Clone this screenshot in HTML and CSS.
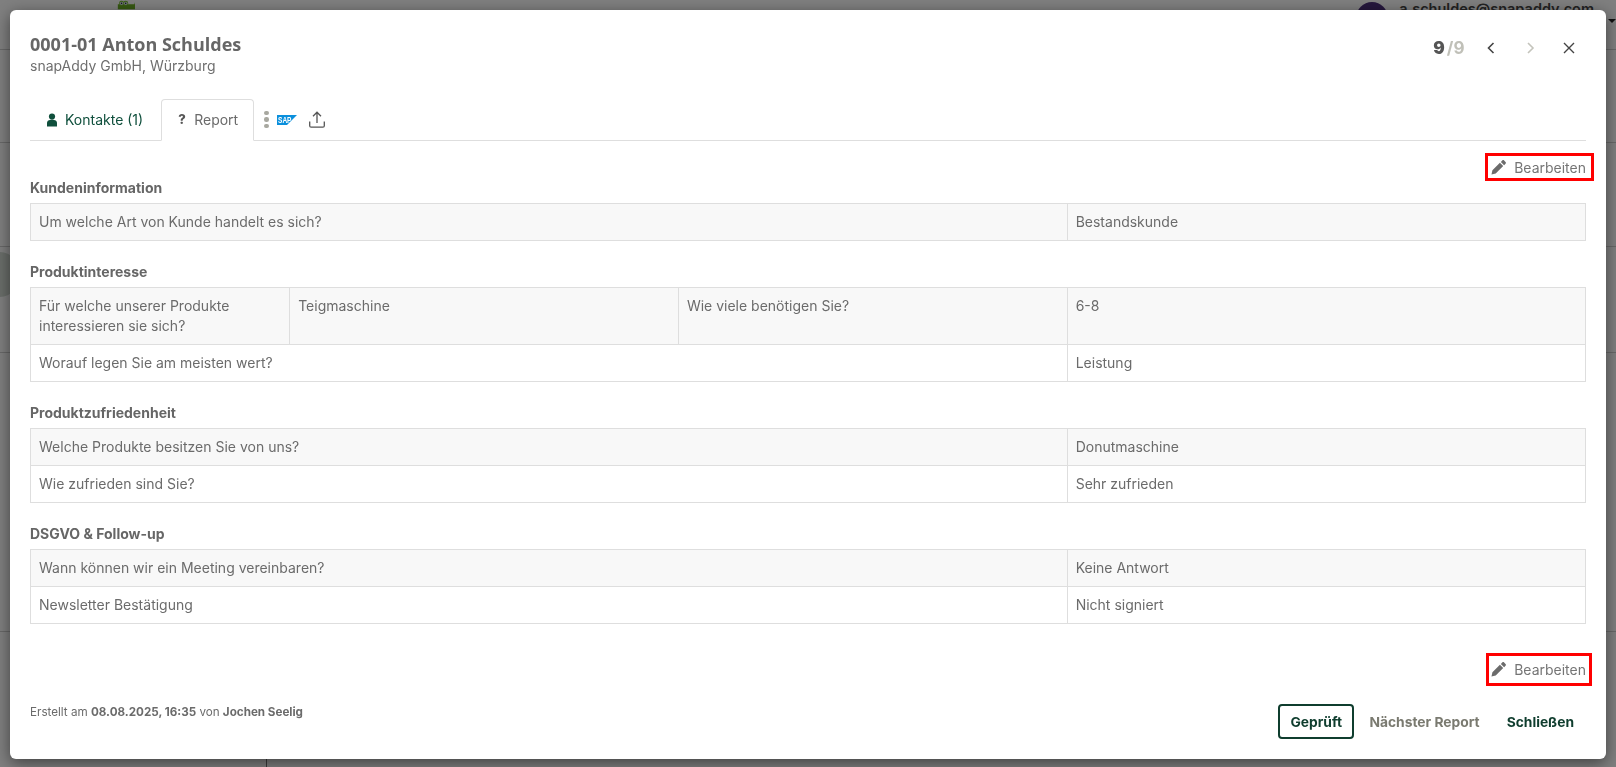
FILE: index.html
```html
<!DOCTYPE html>
<html lang="de">
<head>
<meta charset="utf-8">
<title>Report</title>
<link rel="stylesheet" href="styles.css">
</head>
<body>
<div class="page">
  <div class="bgrow r1">
    <svg class="frog" viewBox="0 0 22 10" width="22" height="10"><path d="M1 10V4h20l1-3v9z" fill="#6cb024"/><circle cx="5.500" cy="3" r="3" fill="#78c030"/><circle cx="10.500" cy="3" r="3" fill="#78c030"/><circle cx="5.500" cy="3" r="2" fill="#eef"/><circle cx="10.500" cy="3" r="2" fill="#eef"/><circle cx="5.500" cy="3" r="1" fill="#234"/><circle cx="10.500" cy="3" r="1" fill="#234"/></svg>
    <div class="user"><span class="avatar"></span><span class="email">a.schuldes@snapaddy.com</span></div>
    <span class="caret"></span>
  </div>
  <div class="bgrow r2"></div>
  <div class="bgrow r3"></div>
  <div class="bgrow r4"><span class="blob"></span></div>
  <div class="bgrow r5"></div>
  <div class="bgrow r6"><span class="vline"></span></div>
</div>
<div class="overlay"></div>
<main class="modal">
  <header class="head">
    <div>
      <h1 class="title">0001-01 Anton Schuldes</h1>
      <div class="sub">snapAddy GmbH, Würzburg</div>
    </div>
    <div class="pager">
      <span class="count"><b>9</b> <i>/9</i></span>
      <svg class="nav" viewBox="0 0 16 16" width="16" height="16"><path d="M10.500 3 5.500 8l5 5" fill="none" stroke="#444" stroke-width="1.600"/></svg>
      <svg class="nav" viewBox="0 0 16 16" width="16" height="16"><path d="M5 3l5 5-5 5" fill="none" stroke="#c4c4bc" stroke-width="1.600"/></svg>
      <svg class="nav close" viewBox="0 0 16 16" width="16" height="16"><path d="M3 3l10 10M13 3 3 13" fill="none" stroke="#444" stroke-width="1.400"/></svg>
    </div>
  </header>
  <nav class="tabs">
    <a class="tab">
      <svg viewBox="0 0 12 14" width="12" height="14"><circle cx="6" cy="3.600" r="3.100" fill="#0f4f3c"/><path d="M1 13.500V10c0-2 1.500-3 3-3h4c1.500 0 3 1 3 3v3.500z" fill="#0f4f3c"/></svg>
      Kontakte (1)
    </a>
    <a class="tab active"><span class="q">?</span> Report</a>
    <span class="dots"><i></i><i></i><i></i></span>
    <svg class="sap" viewBox="0 0 20 10" width="20" height="10"><path d="M0 0h20L10 10H0z" fill="#0a8fdc"/><text x="1" y="7.800" font-size="8.500" font-weight="700" font-family="Liberation Sans" textLength="13.500" lengthAdjust="spacingAndGlyphs" fill="#fff">SAP</text></svg>
    <svg class="upload" viewBox="0 0 16 17" width="16" height="17"><path d="M8 12V1.500M4 5.200l4-4 4 4M.7 10.500v4.200c0 .9.500 1.500 1.400 1.500h11.800c.9 0 1.400-.6 1.400-1.500v-4.200" fill="none" stroke="#555" stroke-width="1.300"/></svg>
  </nav>
  <div class="edit-row first"><a class="edit">
    <svg viewBox="0 0 16 16" width="15" height="15"><path d="M0.500 15.500l1-4.500 8-8 3.500 3.500-8 8zM10.500 2l1.500-1.500c.6-.6 1.400-.6 2 0l1.500 1.500c.6.6.6 1.400 0 2L14 5.500z" fill="#6b6b6b"/></svg>
    Bearbeiten</a></div>

  <section class="group first-group">
    <h2>Kundeninformation</h2>
    <table>
      <colgroup><col class="c1"><col class="c2"><col class="c3"><col class="c4"></colgroup>
      <tr class="odd"><td colspan="3">Um welche Art von Kunde handelt es sich?</td><td>Bestandskunde</td></tr>
    </table>
  </section>
  <section class="group">
    <h2>Produktinteresse</h2>
    <table>
      <colgroup><col class="c1"><col class="c2"><col class="c3"><col class="c4"></colgroup>
      <tr class="odd"><td>Für welche unserer Produkte interessieren sie sich?</td><td>Teigmaschine</td><td>Wie viele benötigen Sie?</td><td>6-8</td></tr>
      <tr><td colspan="3">Worauf legen Sie am meisten wert?</td><td>Leistung</td></tr>
    </table>
  </section>
  <section class="group">
    <h2>Produktzufriedenheit</h2>
    <table>
      <colgroup><col class="c1"><col class="c2"><col class="c3"><col class="c4"></colgroup>
      <tr class="odd"><td colspan="3">Welche Produkte besitzen Sie von uns?</td><td>Donutmaschine</td></tr>
      <tr><td colspan="3">Wie zufrieden sind Sie?</td><td>Sehr zufrieden</td></tr>
    </table>
  </section>
  <section class="group">
    <h2>DSGVO &amp; Follow-up</h2>
    <table>
      <colgroup><col class="c1"><col class="c2"><col class="c3"><col class="c4"></colgroup>
      <tr class="odd"><td colspan="3">Wann können wir ein Meeting vereinbaren?</td><td>Keine Antwort</td></tr>
      <tr><td colspan="3">Newsletter Bestätigung</td><td>Nicht signiert</td></tr>
    </table>
  </section>

  <div class="edit-row second"><a class="edit">
    <svg viewBox="0 0 16 16" width="15" height="15"><path d="M0.500 15.500l1-4.500 8-8 3.500 3.500-8 8zM10.500 2l1.500-1.500c.6-.6 1.400-.6 2 0l1.500 1.500c.6.6.6 1.400 0 2L14 5.500z" fill="#6b6b6b"/></svg>
    Bearbeiten</a></div>

  <footer class="foot">
    <div class="meta">Erstellt am <b>08.08.2025, 16:35</b> von <b>Jochen Seelig</b></div>
    <div class="actions">
      <button class="btn outline">Geprüft</button>
      <button class="btn muted">Nächster Report</button>
      <button class="btn plain">Schließen</button>
    </div>
  </footer>
</main>
</body>
</html>
```
FILE: styles.css
```css
* { box-sizing: border-box; }
html, body { margin: 0; height: 100%; overflow: hidden; }
body { background: #fff; font-family: Inter, "Liberation Sans", sans-serif; font-size: 14px; color: #6b6b6b; }
.page { height: 767px; }
.bgrow { border-bottom: 1px solid #d0d0d0; }
.r1 { height: 50px; display: flex; align-items: flex-start; }
.r2 { height: 93px; }
.r3 { height: 104px; }
.r4 { height: 101px; }
.r5 { height: 279px; }
.r6 { height: 140px; border-bottom: 0; display: flex; }
.frog { margin: 0 0 0 117px; }
.user { margin-left: 1221px; display: flex; gap: 11px; align-items: flex-start; }
.avatar { width: 32px; height: 32px; margin-top: 2px; border-radius: 50%; background: #4b2e7a; }
.email { font-size: 14.500px; font-weight: 600; color: #444; line-height: 18px; }
.caret { margin: 19px 0 0 14px; border: 4px solid transparent; border-top-color: #222; border-bottom: 0; }
.blob { display: block; width: 40px; height: 45px; margin: 5px 0 0 -20px; border-radius: 50%; background: #d4dcd4; }
.vline { width: 1px; height: 100%; margin-left: 266px; background: #777; }
.overlay { position: fixed; inset: 0; background: rgba(0,0,0,.5); }
.modal {
  position: fixed; left: 10px; top: 10px; width: 1596px; height: 749px;
  background: #fff; border-radius: 6px; padding: 0 20px;
  box-shadow: 0 4px 16px rgba(0,0,0,.5);
}
.head { display: flex; justify-content: space-between; align-items: flex-start; padding-top: 23px; height: 89px; }
.title { margin: 0; font-size: 18px; line-height: 23px; font-weight: 700; color: #666; font-family: "Open Sans", Inter, sans-serif; }
.sub { font-size: 14px; line-height: 18px; color: #6f6f6f; margin-top: 1px; }
.pager { display: flex; align-items: center; gap: 24px; padding: 4px 9.500px 0 0; }
.count { font-size: 17px; line-height: 22px; font-weight: 700; margin-right: -6px; }
.count b { color: #555; }
.count i { font-style: normal; color: #c0c0b8; margin-left: -2px; }
.close { margin-left: -2px; }
.tabs { display: flex; align-items: center; height: 42px; border-bottom: 1px solid #dedede; }
.tab { display: flex; align-items: center; gap: 7px; height: 41px; padding: 0 18px 0 16px; color: #0f4f3c; }
.tab.active { color: #6b6b6b; background: #fff; border: 1px solid #dedede; border-bottom-color: #fff; border-radius: 4px 4px 0 0; margin-bottom: -1px; padding: 0 15px 2px 16px; height: 42px; }
.q { font-weight: 800; font-size: 13px; color: #555; width: 9px; }
.dots { display: flex; flex-direction: column; gap: 2px; margin-left: 10px; }
.dots i { width: 4.500px; height: 4.500px; border-radius: 50%; background: #a8a8a0; }
.sap { margin-left: 8px; }
.upload { margin-left: 12px; }
.edit-row { display: flex; justify-content: flex-end; }
.edit-row.first { height: 0; }
.edit-row.second { margin-top: 29px; }
.edit { display: flex; align-items: center; gap: 8px; border: 3px solid #f00; color: #757575; }
.first .edit { margin: 12px -8px 0 0; height: 28px; padding: 0 5px 0 3px; }
.second .edit { margin-right: -6px; height: 33px; padding: 0 3px 0 2px; }
.group { margin-top: 21px; }
.first-group { margin-top: 37px; }
.group h2 { margin: 0 0 6px; font-size: 14px; line-height: 19px; font-weight: 700; color: #666; }
table { width: 100%; table-layout: fixed; border-collapse: collapse; }
.c1 { width: 16.667%; } .c2 { width: 25%; } .c3 { width: 25%; } .c4 { width: 33.333%; }
td { border: 1px solid #dedede; padding: 8px; line-height: 20px; vertical-align: top; color: #6b6b6b; }
.odd td { background: #f8f8f8; }
.foot { display: flex; justify-content: space-between; align-items: flex-start; margin-top: 18px; }
.meta { font-size: 11.650px; line-height: 14px; margin-top: 1px; }
.actions { display: flex; gap: 3px; }
.btn { font: 700 13.800px Inter, sans-serif; background: none; border: 2px solid transparent; height: 35px; padding: 0 10px; color: #0f3d2e; }
.btn.outline { border-color: #0f3d2e; border-radius: 4px; padding: 0 10.500px; }
.btn.muted { color: #7a7a70; }
```
